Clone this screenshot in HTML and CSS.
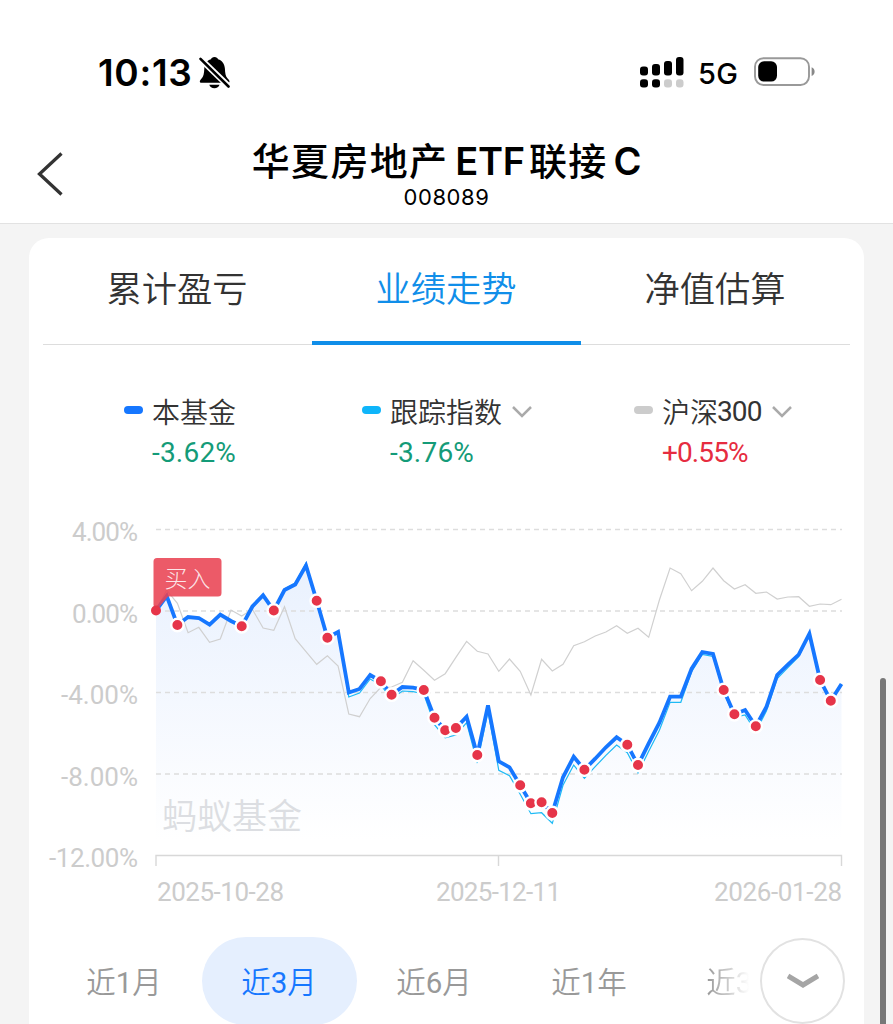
FILE: index.html
```html
<!DOCTYPE html>
<html lang="zh-CN">
<head>
<meta charset="utf-8">
<title>华夏房地产ETF联接C</title>
<link rel="stylesheet" href="styles.css">
</head>
<body>
<header class="header">
  <div class="status">
    <span class="time">10:13</span>
    <svg class="bell" width="32" height="34" viewBox="0 0 32 34"><path d="M15.500 1c-2 0-3 1-3.500 2.200C7.800 4.500 5.500 8 5.300 12.500c-.2 5-.8 7.500-2.300 9.500C1.800 23.600.8 24.300.8 25.500c0 .9.600 1.300 1.700 1.300h26.500c1 0 1.500-.4 1.500-1.300 0-1.200-1.100-2-2.300-3.500-1.500-2-2.100-4.500-2.300-9.500C25.700 8 23.200 4.500 19 3.200 18.500 2 17.500 1 15.500 1zM10.300 28.800h10.200c-.6 2.200-2.600 3.500-5.100 3.500s-4.500-1.300-5.100-3.500z"/><path d="M1 2.500 30.500 31" stroke="#fff" stroke-width="6"/><path d="M1.500 2.800 29.500 30.500" stroke="#000" stroke-width="2.600" stroke-linecap="round"/></svg>
    <svg class="signal" width="44" height="31" viewBox="0 0 44 31"><g><rect x="0" y="9.500" width="8" height="9" rx="3"/><rect x="12" y="7" width="8" height="11.500" rx="3"/><rect x="24" y="4" width="8" height="14.500" rx="3"/><rect x="36" y="0" width="7.500" height="18.500" rx="3"/><rect x="0" y="22.200" width="8" height="8.300" rx="3"/><rect x="12" y="22.200" width="8" height="8.300" rx="3"/></g><g fill="#ccc"><rect x="24" y="22.200" width="8" height="8.300" rx="3"/><rect x="36" y="22.200" width="7.500" height="8.300" rx="3"/></g></svg>
    <span class="network">5G</span>
    <svg class="battery" width="62" height="30" viewBox="0 0 62 30"><rect x="1" y="1.200" width="54" height="26.800" rx="8.500" fill="#fff" stroke="#999" stroke-width="1.900"/><rect x="4.200" y="4.300" width="18.800" height="20.300" rx="5.800"/><path d="M57.600 10.200c4 1.500 4 7.300 0 8.800z" fill="#888"/></svg>
  </div>
  <div class="titlebar">
    <svg class="back" width="28" height="46" viewBox="0 0 28 46"><path d="M24.500 2.500 2.500 23l22 20.500" fill="none" stroke="#333" stroke-width="3.300"/></svg>
    <div class="heading">
      <h1 class="title"><span class="han">华夏房地产</span><span class="latin">ETF</span><span class="han">联接</span><span class="latin">C</span></h1>
      <div class="code">008089</div>
    </div>
  </div>
</header>
<main class="content">
  <section class="card">
    <nav class="tabs">
      <div class="tab">累计盈亏</div>
      <div class="tab active">业绩走势</div>
      <div class="tab">净值估算</div>
    </nav>
    <div class="legend">
      <div class="series fund"><i class="mark"></i><div class="name">本基金</div><div class="value down">-3.62%</div></div>
      <div class="series index"><i class="mark"></i><div class="name">跟踪指数<svg class="chev" width="20" height="14" viewBox="0 0 20 14"><path d="m1 3 9 9 9-9" fill="none" stroke="#aaa" stroke-width="2.500"/></svg></div><div class="value down">-3.76%</div></div>
      <div class="series market"><i class="mark"></i><div class="name">沪深<span class="num">300</span><svg class="chev" width="20" height="14" viewBox="0 0 20 14"><path d="m1 3 9 9 9-9" fill="none" stroke="#aaa" stroke-width="2.500"/></svg></div><div class="value up">+0.55%</div></div>
    </div>
    <svg class="chart" width="835" height="410" viewBox="29 500 835 410">
      <defs><linearGradient id="area" x1="0" y1="565" x2="0" y2="840" gradientUnits="userSpaceOnUse"><stop offset="0" stop-color="#e9f1fe"/><stop offset="1" stop-color="#fff"/></linearGradient></defs>
      <path id="fill" fill="url(#area)"/>
      <g class="grid"><path d="M156 529.500H842M156 611H842M156 692.500H842M156 774H842"/></g>
      <path class="axis" d="M156 866V855.500H841.500V866M498.500 855.500V866"/>
      <g class="ticks">
        <text x="72" y="541" textLength="66">4.00%</text>
        <text x="72" y="622.500" textLength="66">0.00%</text>
        <text x="61" y="704" textLength="77">-4.00%</text>
        <text x="61" y="785.500" textLength="77">-8.00%</text>
        <text x="49" y="867" textLength="89">-12.00%</text>
        <text x="157" y="900.500" textLength="127">2025-10-28</text>
        <text x="436" y="900.500" textLength="125">2025-12-11</text>
        <text x="714" y="900.500" textLength="128">2026-01-28</text>
      </g>
      <text class="watermark" x="162" y="829" textLength="140">蚂蚁基金</text>
      <path id="market" class="market-line"/>
      <path id="index" class="index-line"/>
      <path id="fund" class="fund-line"/>
      <g id="trades" class="trades"></g>
      <path class="flag" d="M157 558H218a3.500 3.500 0 0 1 3.500 3.500V593a3.500 3.500 0 0 1-3.500 3.500H168L156 611 153.500 605V561.500A3.500 3.500 0 0 1 157 558z"/>
      <circle class="origin" cx="156" cy="610.500" r="5"/>
      <text class="flag-text" x="164.500" y="587" textLength="46">买入</text>
    </svg>
    <div class="ranges">
      <div class="range">近<span class="num">1</span>月</div>
      <div class="range selected">近<span class="num">3</span>月</div>
      <div class="range">近<span class="num">6</span>月</div>
      <div class="range">近<span class="num">1</span>年</div>
      <div class="range fading">近<span class="num">3</span>年</div>
      <div class="more"><svg width="32" height="18" viewBox="0 0 32 18"><path d="m1 4 15 9 15-9" fill="none" stroke="#a5a5a5" stroke-width="5"/></svg></div>
    </div>
  </section>
  <div class="scrollbar"></div>
</main>
<script src="chart.js"></script>
</body>
</html>
```
FILE: styles.css
```css
* { box-sizing: border-box; }
body { margin: 0; width: 893px; height: 1024px; overflow: hidden; background: #f4f4f4; color: #333; font-family: Roboto, "Noto Sans CJK SC", sans-serif; }
.header { height: 224px; background: #fff; border-bottom: 1px solid #e2e2e2; color: #000; }
.status { height: 130px; display: flex; align-items: flex-start; padding: 52px 0 0 98px; }
.time { width: 101px; font: 600 37px/42px Inter, sans-serif; white-space: nowrap; letter-spacing: .7px; }
.bell { margin-top: 4px; }
.signal { margin: 5px 0 0 409px; }
.network { width: 56px; padding-left: 14px; font: 500 29px/44px Inter, sans-serif; letter-spacing: .2px; }
.battery { margin-top: 5px; margin-left: 14px; }
.titlebar { display: grid; grid-template-columns: 140px 1fr 140px; }
.back { margin: 21px 0 0 37px; }
.heading { text-align: center; }
.title { display: flex; justify-content: center; margin: 6px 0 0; height: 49px; white-space: nowrap; }
.han { font: 500 38px/45px "Noto Sans CJK SC", sans-serif; letter-spacing: 1.300px; }
.latin { font: 600 38px/50px Inter, sans-serif; margin: 0 4px 0 7px; letter-spacing: -.3px; }
.latin:last-child { margin: 0 0 0 6px; }
.code { font: 400 22px/24px Inter, sans-serif; letter-spacing: .6px; }
.content { padding: 14px 29px 0; }
.card { height: 820px; background: #fff; border-radius: 20px; }
.tabs { display: grid; grid-template-columns: repeat(3, 269px); height: 107px; margin: 0 14px; border-bottom: 1px solid #ddd; }
.tab { height: 107px; padding-right: 1px; text-align: center; font: 350 35.300px/98px "Noto Sans CJK SC", sans-serif; }
.tab.active { color: #108ee9; border-bottom: 4px solid #108ee9; }
.legend { display: grid; grid-template-columns: 238px 272px 200px; padding: 45px 0 0 95px; height: 155px; }
.series { display: grid; grid-template-columns: 28px 1fr; grid-template-rows: 42px 42px; align-items: center; }
.mark { width: 19px; height: 8px; border-radius: 4px; background: #1677ff; margin-top: -2px; }
.index .mark { background: #0fb5fa; }
.market .mark { background: #ccc; }
.name { display: flex; align-items: center; font: 350 28px/42px "Noto Sans CJK SC", sans-serif; white-space: nowrap; }
.num { font-family: Roboto, sans-serif; font-weight: 400; }
.name .num { letter-spacing: -.9px; margin-left: -1px; padding-top: 2px; }
.chev { margin-left: 10px; }
.value { grid-column: 2; font-size: 28px; line-height: 42px; letter-spacing: .2px; }
.down { color: #149b78; }
.up { color: #e62c40; letter-spacing: -.9px; }
.chart { display: block; }
.grid { stroke: #ddd; stroke-width: 1.400; stroke-dasharray: 5 4; }
.axis { fill: none; stroke: #d8d8d8; stroke-width: 1.400; }
.ticks { font-size: 26px; fill: #ccc; }
.watermark { font: 350 35px "Noto Sans CJK SC", sans-serif; fill: #dcdee2; }
.market-line, .index-line, .fund-line { fill: none; }
.market-line { stroke: #d0d0d0; stroke-width: 1.200; }
.index-line { stroke: #1dbaf5; stroke-width: 1.200; }
.fund-line { stroke: #1677ff; stroke-width: 3.800; }
.trades { fill: #e63549; stroke: #fff; stroke-width: 2.400; }
.flag { fill: #e94252; fill-opacity: .87; }
.origin { fill: #e63549; }
.flag-text { font: 300 23px "Noto Sans CJK SC", sans-serif; fill: #fff; fill-opacity: .85; }
.ranges { position: relative; display: grid; grid-template-columns: repeat(5, 155px); padding-left: 18px; margin-top: 27px; }
.range { height: 88px; padding-right: 1px; border-radius: 44px; text-align: center; color: #999; font: 350 29.500px/87px "Noto Sans CJK SC", sans-serif; }
.range.selected { background: #e5effe; color: #1677ff; }
.range.fading { color: transparent; background: linear-gradient(90deg, #999 26%, #fff 53%); background-clip: text; -webkit-background-clip: text; }
.more { position: absolute; left: 731px; top: 1px; width: 85px; height: 86px; border: 2px solid #e2e2e2; border-radius: 50%; background: #fff; display: flex; align-items: center; justify-content: center; }
.scrollbar { position: absolute; left: 880px; top: 678px; width: 6px; height: 366px; border-radius: 3px; background: #777; }
```
FILE: chart.js
```js
const fund = [610.5,596,625,617,618,624.7,614.7,621,626.3,606.5,595.3,610.5,590,584.5,565.5,600.7,637.7,632,692.5,689,675,681.3,694.7,687,687.7,690,717.7,730.3,728,716.7,755,705.3,761.3,767.3,785.3,803.3,802.3,813,777.3,756.7,769.7,758.7,747.3,737.3,744.7,765,743.3,722.7,696.7,696.7,668.7,652,654,690,714.3,710,726.3,706.7,675,664.7,654.7,633.7,680,700.7,684];
const market = [610.5,590,603.3,632.7,627.3,642.3,639,610,616,609.3,628,630.3,606.7,638.7,651.7,664.3,655.7,666,714,716.7,698.5,687.3,687,682.3,660.7,670.3,680.3,673.7,657.3,641.3,651.3,654,671.3,659,671.3,695,659.3,671,664.3,645.7,641.7,636,632,625.7,633.3,628.3,637.3,600,568,573.7,590.7,581.3,568,580.7,589,584.7,593.3,592,599,597,596.7,606.3,604,604.7,599.3];
const gap = [0,0,0,0,0,0,0,0,0,0,0,0,-1,-1.5,-2.5,0,1,1,4.5,4,4,4,4,4,4,4,7,7.5,7,6,8,6,9,8.5,9,10.4,10.4,10.3,8,8.3,8.6,8,8,7.7,8,8,8,7.5,5.6,5.6,3,2.5,2.5,2,3,5,5.5,4,3.5,3,2,0,1,1,0];
const trades = [2,8,11,15,16,21,22,25,26,27,28,30,34,35,36,37,40,44,45,53,54,56,62,63];
const x = i => (156 + i * 10.711).toFixed(1);
const line = data => 'M' + data.map((y, i) => x(i) + ' ' + y.toFixed(1)).join('L');
document.getElementById('fund').setAttribute('d', line(fund));
document.getElementById('market').setAttribute('d', line(market));
document.getElementById('index').setAttribute('d', line(fund.map((y, i) => y + gap[i])));
document.getElementById('fill').setAttribute('d', line(fund) + 'V840H156Z');
document.getElementById('trades').innerHTML = trades.map(i => `<circle cx="${x(i)}" cy="${fund[i]}" r="6.2"/>`).join('');
```
